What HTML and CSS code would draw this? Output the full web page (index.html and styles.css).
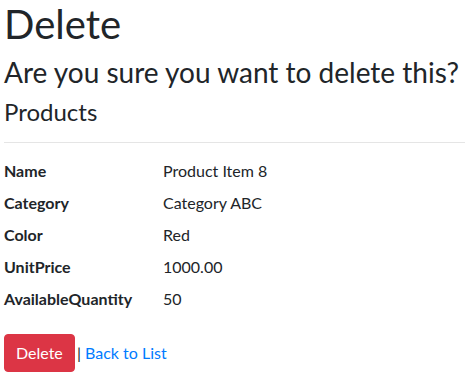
FILE: index.html
```html
<!DOCTYPE html>
<html lang="en">
<head>
  <meta charset="UTF-8">
  <meta name="viewport" content="width=device-width, initial-scale=1.0">
  <title>Delete - Products</title>
  <link rel="stylesheet" href="styles.css">
</head>
<body>
  <main class="page">
    <h1 class="title">Delete</h1>

    <h3 class="question">Are you sure you want to delete this?</h3>
    <div class="details">
      <h4 class="entity">Products</h4>
      <hr class="divider">
      <dl class="fields">
        <dt>Name</dt>
        <dd>Product Item 8</dd>
        <dt>Category</dt>
        <dd>Category ABC</dd>
        <dt>Color</dt>
        <dd>Red</dd>
        <dt>UnitPrice</dt>
        <dd>1000.00</dd>
        <dt>AvailableQuantity</dt>
        <dd>50</dd>
      </dl>

      <form class="actions" action="#" onsubmit="return false;">
        <button type="submit" class="btn-danger">Delete</button> |
        <a href="#" class="back-link">Back to List</a>
      </form>
    </div>
  </main>
</body>
</html>
```

FILE: styles.css
```css
body {
  margin: 0;
  font-family: Lato, "Noto Sans", sans-serif;
  font-size: 16px;
  line-height: 1.5;
  color: #212529;
  background: #fff;
}

.page {
  padding-left: 4px;
}

h1, h3, h4 {
  margin: 0 0 8px;
  font-weight: 400;
  line-height: 1.2;
}

.title {
  font-size: 40px;
}

.question {
  font-size: 28px;
  white-space: nowrap;
}

.entity {
  font-size: 24px;
}

.divider {
  margin: 16px 0;
  border: 0;
  border-top: 1px solid rgba(0, 0, 0, 0.1);
}

.fields {
  display: grid;
  grid-template-columns: 159px 1fr;
  margin: 0 0 15px;
}

.fields dt {
  font-weight: 700;
}

.fields dd {
  margin: 0 0 8px;
}

.actions {
  margin: 0;
}

.btn-danger {
  font: inherit;
  line-height: 1.5;
  color: #fff;
  background: #dc3545;
  border: 1px solid #dc3545;
  border-radius: 4px;
  padding: 6px 11px;
  margin-right: -2px;
  cursor: pointer;
}

.back-link {
  color: #007bff;
  text-decoration: none;
}
```
